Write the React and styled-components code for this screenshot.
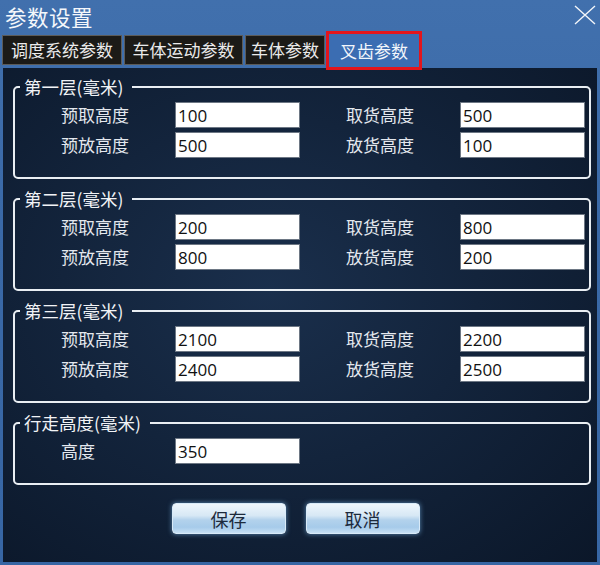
import styled, { createGlobalStyle } from "styled-components";

const GlobalStyle = createGlobalStyle`
  html, body {
    margin: 0;
    padding: 0;
    background: #0c1a2e;
  }
  * {
    box-sizing: border-box;
  }
`;

const FONT = `"Noto Sans CJK SC", "Noto Sans", sans-serif`;

const Window = styled.div`
  width: 600px;
  height: 565px;
  display: flex;
  flex-direction: column;
  padding: 0 3px 3px 3px;
  background: linear-gradient(180deg, #4170ad 0%, #3a69a7 40%, #3766a4 100%);
  font-family: ${FONT};
  overflow: hidden;
`;

const TitleBar = styled.div`
  height: 34px;
  display: flex;
  align-items: center;
  justify-content: space-between;
  padding: 0 1px 0 2px;
`;

const Title = styled.div`
  color: #f4f7fb;
  font-size: 21.5px;
  line-height: 24px;
  letter-spacing: 0.5px;
`;

const CloseButton = styled.div`
  width: 22px;
  height: 20px;
  margin-top: -4px;
  display: flex;
`;

const TabRow = styled.div`
  height: 34px;
  display: flex;
  align-items: flex-start;
  gap: 2px;
  padding-top: 1px;
  margin-left: -1px;
`;

const Tab = styled.div`
  width: ${(p) => p.$width}px;
  height: 30px;
  display: flex;
  align-items: center;
  justify-content: center;
  background: #1b1a17;
  border: 1px solid #5c5b58;
  color: #ebebeb;
  font-size: 17px;
  line-height: 20px;
  white-space: nowrap;
`;

const ActiveTab = styled(Tab)`
  position: relative;
  z-index: 1;
  height: 33px;
  margin-top: -1px;
  margin-left: 2px;
  background: #3b6db2;
  border: none;
  color: #f2f6fb;
  outline: 3px solid #e3151c;
`;

const Content = styled.div`
  flex: 1;
  display: flex;
  flex-direction: column;
  gap: 10px;
  padding: 9px 6px 0 10px;
  background: radial-gradient(
    ellipse at 45% 45%,
    #1a2f4c 0%,
    #13243c 45%,
    #0b1729 100%
  );
`;

const Group = styled.fieldset`
  margin: 0;
  min-width: 0;
  border: 2px solid #e9eef3;
  border-radius: 5px;
  padding: 5px 0 19px 0;
`;

const Legend = styled.legend`
  margin-left: 5px;
  padding: 0 9px 0 4px;
  color: #f1f3f6;
  font-size: 17.5px;
  line-height: 20px;
`;

const Rows = styled.div`
  display: flex;
  flex-direction: column;
  gap: 4px;
  padding-left: 45px;
`;

const Row = styled.div`
  display: flex;
  gap: 45px;
`;

const Field = styled.div`
  display: flex;
  align-items: center;
`;

const Label = styled.span`
  width: 115px;
  padding-left: 1px;
  color: #e4e8ee;
  font-size: 17px;
  line-height: 20px;
`;

const Input = styled.input`
  width: 125px;
  height: 26px;
  padding: 0 2px;
  border: 1px solid #6d7784;
  background: #ffffff;
  color: #111111;
  font-family: "Open Sans", ${FONT};
  font-size: 17px;
  line-height: 24px;
  outline: none;
`;

const ButtonRow = styled.div`
  display: flex;
  justify-content: center;
  gap: 20px;
  margin-top: 8px;
  padding-right: 13px;
`;

const Button = styled.button`
  width: 114px;
  height: 31px;
  border: 1px solid #d8eaf8;
  border-radius: 4px;
  background: linear-gradient(
    180deg,
    #eef6fc 0%,
    #d7e8f5 40%,
    #b3d2ec 55%,
    #a6cbea 80%,
    #c7e0f4 100%
  );
  box-shadow: 0 0 5px rgba(120, 180, 230, 0.7);
  color: #1c2a3c;
  font-family: ${FONT};
  font-size: 18px;
  line-height: 20px;
  padding: 0;
  cursor: pointer;
`;

const groups = [
  {
    title: "第一层(毫米)",
    rows: [
      [["预取高度", "100"], ["取货高度", "500"]],
      [["预放高度", "500"], ["放货高度", "100"]],
    ],
  },
  {
    title: "第二层(毫米)",
    rows: [
      [["预取高度", "200"], ["取货高度", "800"]],
      [["预放高度", "800"], ["放货高度", "200"]],
    ],
  },
  {
    title: "第三层(毫米)",
    rows: [
      [["预取高度", "2100"], ["取货高度", "2200"]],
      [["预放高度", "2400"], ["放货高度", "2500"]],
    ],
  },
  {
    title: "行走高度(毫米)",
    rows: [[["高度", "350"]]],
  },
];

const tabs = [
  { name: "调度系统参数", width: 120 },
  { name: "车体运动参数", width: 119 },
  { name: "车体参数", width: 80 },
];

export default function App() {
  return (
    <>
      <GlobalStyle />
      <Window>
        <TitleBar>
          <Title>参数设置</Title>
          <CloseButton>
            <svg width="22" height="20" viewBox="0 0 22 20">
              <path
                d="M1 1 L21 19 M21 1 L1 19"
                stroke="#f2f5f9"
                strokeWidth="1.4"
                fill="none"
              />
            </svg>
          </CloseButton>
        </TitleBar>
        <TabRow>
          {tabs.map((tab) => (
            <Tab key={tab.name} $width={tab.width}>
              {tab.name}
            </Tab>
          ))}
          <ActiveTab $width={90}>叉齿参数</ActiveTab>
        </TabRow>
        <Content>
          {groups.map((group) => (
            <Group key={group.title}>
              <Legend>{group.title}</Legend>
              <Rows>
                {group.rows.map((row, i) => (
                  <Row key={i}>
                    {row.map(([label, value]) => (
                      <Field key={label}>
                        <Label>{label}</Label>
                        <Input defaultValue={value} />
                      </Field>
                    ))}
                  </Row>
                ))}
              </Rows>
            </Group>
          ))}
          <ButtonRow>
            <Button>保存</Button>
            <Button>取消</Button>
          </ButtonRow>
        </Content>
      </Window>
    </>
  );
}
